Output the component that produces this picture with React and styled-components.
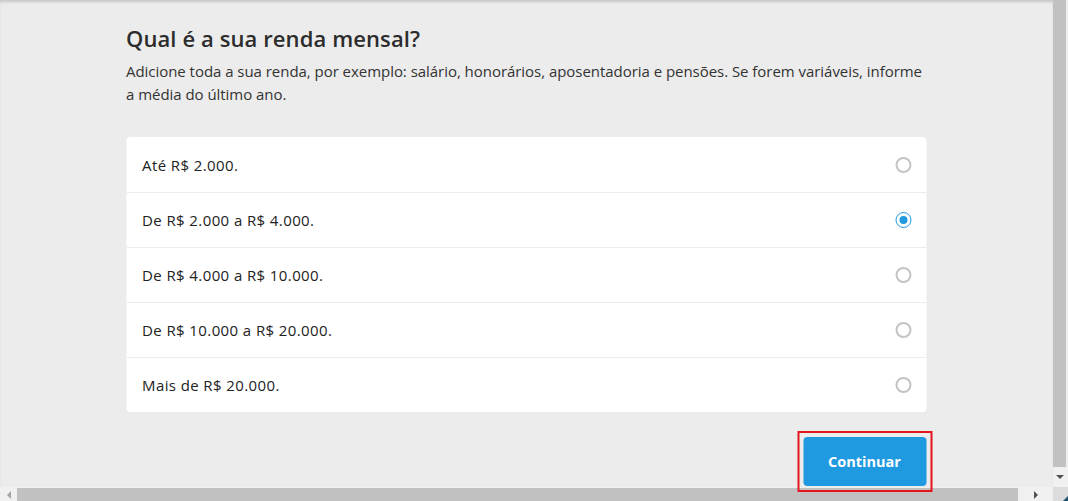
import { useState } from "react";
import styled, { createGlobalStyle } from "styled-components";

const GlobalStyle = createGlobalStyle`
  html, body { margin: 0; padding: 0; height: 100%; overflow: hidden; }
  body { font-family: "Open Sans", "Liberation Sans", sans-serif; color: #333; }
  #root { height: 100%; }
`;

const Frame = styled.div`
  display: grid;
  grid-template-columns: 1fr 15px;
  grid-template-rows: 1fr 14px;
  width: 100vw;
  height: 100vh;
`;

const Page = styled.main`
  background: #ececec;
  box-shadow: inset 0 3px 3px -1px rgba(0, 0, 0, 0.16);
  min-height: 0;
`;

const Container = styled.div`
  width: 800px;
  margin: 0 auto;
  padding-top: 24px;
  display: flex;
  flex-direction: column;
  transform: translateX(-0.5px);
`;

const Title = styled.h1`
  margin: 0;
  font-size: 22px;
  line-height: 28px;
  font-weight: 600;
  letter-spacing: 0.1px;
  color: #2c2c2c;
`;

const Lead = styled.p`
  margin: 8px 0 0;
  font-size: 15px;
  letter-spacing: -0.04px;
  line-height: 23px;
  color: #333;
`;

const Card = styled.ul`
  list-style: none;
  margin: 31px 0 0;
  padding: 0;
  background: #fff;
  border-radius: 4px;
`;

const Option = styled.li`
  box-sizing: border-box;
  height: 55px;
  display: flex;
  align-items: center;
  justify-content: space-between;
  padding: 0 15px 0 16px;
  font-size: 15px;
  letter-spacing: 0.4px;
  color: #222;
  cursor: pointer;
  & + & { border-top: 1px solid #ececec; }
`;

const Radio = styled.span`
  box-sizing: border-box;
  width: 16px;
  height: 16px;
  border-radius: 50%;
  border: ${(p) => (p.$checked ? "1.5px solid #1f9ae0" : "2px solid #c4c4c4")};
  display: flex;
  align-items: center;
  justify-content: center;
  &::after {
    content: "";
    width: 8px;
    height: 8px;
    border-radius: 50%;
    background: ${(p) => (p.$checked ? "#1f9ae0" : "transparent")};
  }
`;

const Actions = styled.div`
  display: flex;
  justify-content: flex-end;
  margin-top: 25px;
`;

const Highlight = styled.div`
  position: relative;
  z-index: 2;
  outline: 2px solid #e3161e;
  outline-offset: 4px;
  display: flex;
`;

const Button = styled.button`
  width: 123px;
  height: 49px;
  border: 0;
  border-radius: 4px;
  background: #1f9ae0;
  color: #fff;
  font-family: inherit;
  font-size: 14.5px;
  font-weight: 700;
  cursor: pointer;
`;

const VTrack = styled.div`
  background: #f0f0f0;
  display: flex;
  flex-direction: column;
  padding-right: 2px;
`;

const VThumb = styled.div`
  flex: 1;
  background: #c1c1c1;
`;

const ArrowBox = styled.div`
  width: ${(p) => p.$w || "13px"};
  height: ${(p) => p.$h || "20px"};
  display: flex;
  align-items: center;
  justify-content: center;
  flex: none;
`;

const HTrack = styled.div`
  background: #f0f0f0;
  display: flex;
  align-items: stretch;
  padding-top: 1px;
`;

const HThumb = styled.div`
  flex: 1;
  background: #c1c1c1;
`;

const Corner = styled.div`
  background: #dcdcdc;
  overflow: hidden;
`;

const Tri = ({ dir }) => {
  const pts = {
    down: "0,0 8,0 4,4",
    left: "4,0 4,8 0,4",
    right: "0,0 0,8 4,4",
  }[dir];
  const w = dir === "down" ? 8 : 4;
  const h = dir === "down" ? 4 : 8;
  return (
    <svg width={w} height={h} viewBox={`0 0 ${w} ${h}`}>
      <polygon points={pts} fill={dir === "left" ? "#a3a3a3" : "#505050"} />
    </svg>
  );
};

const options = [
  "Até R$ 2.000.",
  "De R$ 2.000 a R$ 4.000.",
  "De R$ 4.000 a R$ 10.000.",
  "De R$ 10.000 a R$ 20.000.",
  "Mais de R$ 20.000.",
];

export default function App() {
  const [selected, setSelected] = useState(1);
  return (
    <Frame>
      <GlobalStyle />
      <Page>
        <Container>
          <Title>Qual é a sua renda mensal?</Title>
          <Lead>
            Adicione toda a sua renda, por exemplo: salário, honorários, aposentadoria e pensões. Se forem variáveis, informe a média do último ano.
          </Lead>
          <Card>
            {options.map((o, i) => (
              <Option key={o} onClick={() => setSelected(i)}>
                {o}
                <Radio $checked={selected === i} />
              </Option>
            ))}
          </Card>
          <Actions>
            <Highlight>
              <Button>Continuar</Button>
            </Highlight>
          </Actions>
        </Container>
      </Page>
      <VTrack>
        <VThumb />
        <ArrowBox $h="20px">
          <Tri dir="down" />
        </ArrowBox>
      </VTrack>
      <HTrack>
        <ArrowBox $w="17px" $h="auto">
          <Tri dir="left" />
        </ArrowBox>
        <HThumb />
        <ArrowBox $w="35px" $h="auto">
          <Tri dir="right" />
        </ArrowBox>
      </HTrack>
      <Corner>
        <svg width="15" height="14" viewBox="0 0 15 14" style={{ display: "block" }}>
          <polygon points="15,9 15,14 10,14" fill="#1d4f6e" />
        </svg>
      </Corner>
    </Frame>
  );
}
